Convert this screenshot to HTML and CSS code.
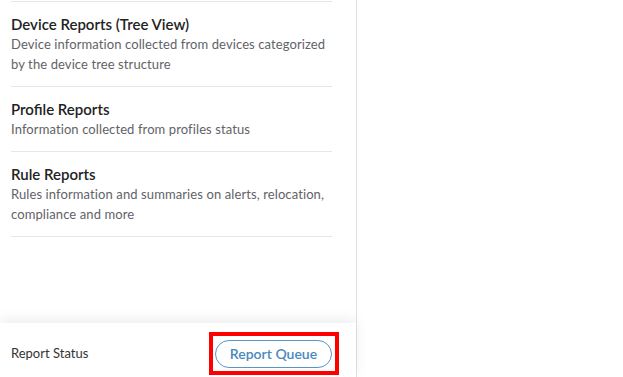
FILE: index.html
```html
<!DOCTYPE html>
<html lang="en">
<head>
    <meta charset="UTF-8">
    <meta name="viewport" content="width=device-width, initial-scale=1.0">
    <title>Reports</title>
    <link rel="stylesheet" href="styles.css">
</head>
<body>
    <div class="panel">
        <div class="report-list">
            <div class="report-item">
                <div class="report-title">Device Reports (Tree View)</div>
                <div class="report-desc">Device information collected from devices categorized by the device tree structure</div>
            </div>
            <div class="report-item">
                <div class="report-title">Profile Reports</div>
                <div class="report-desc">Information collected from profiles status</div>
            </div>
            <div class="report-item">
                <div class="report-title">Rule Reports</div>
                <div class="report-desc">Rules information and summaries on alerts, relocation, compliance and more</div>
            </div>
        </div>

        <div class="panel-footer">
            <span class="status-label">Report Status</span>
            <div class="highlight">
                <button class="queue-btn">Report Queue</button>
            </div>
        </div>
    </div>
</body>
</html>
```

FILE: styles.css
```css
body {
    margin: 0;
    font-family: Lato, "Noto Sans", sans-serif;
    background: #fff;
    color: #222;
}
.panel {
    width: 356px;
    height: 377px;
    border-right: 1px solid #e2e2e2;
    display: flex;
    flex-direction: column;
    background: #fff;
}
.report-list {
    flex: 1;
    padding: 0 24px 0 11px;
}
.report-item {
    border-top: 1px solid #e4e6ea;
    padding: 12px 0;
}
.report-list .report-item:first-child {
    margin-top: 1px;
}
.report-list .report-item:last-child {
    border-bottom: 1px solid #e4e6ea;
}
.report-title {
    font-size: 15px;
    font-weight: 600;
    line-height: 20px;
    color: #222;
}
.report-desc {
    font-size: 13px;
    line-height: 20px;
    color: #5f6368;
    letter-spacing: 0.1px;
}
.panel-footer {
    height: 54px;
    box-sizing: border-box;
    display: flex;
    align-items: center;
    justify-content: space-between;
    padding: 6px 17px 0 11px;
    box-shadow: 0 -4px 12px rgba(0,0,0,0.07);
}
.status-label {
    font-size: 13px;
    color: #333;
}
.highlight {
    border: 4px solid #f00;
    padding: 4px 3px 3px 2px;
}
.queue-btn {
    font-family: inherit;
    font-size: 14px;
    font-weight: 600;
    color: #4a88bd;
    background: #fff;
    border: 1px solid #5b95c6;
    border-radius: 14px;
    height: 28px;
    width: 117px;
    padding: 0;
    display: block;
}
```
